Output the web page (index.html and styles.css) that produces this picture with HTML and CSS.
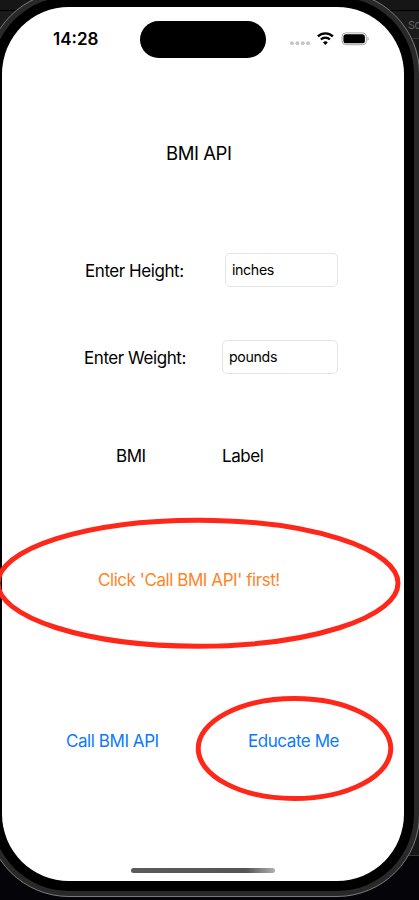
FILE: index.html
```html
<!DOCTYPE html>
<html lang="en">
<head>
<meta charset="utf-8">
<title>BMI API</title>
<link rel="stylesheet" href="styles.css">
</head>
<body>
<div class="backdrop">
  <div class="editor editor-top"></div>
  <div class="editor editor-tab">Sc</div>
  <div class="editor editor-body"></div>
</div>
<div class="phone">
  <div class="bezel">
    <main class="screen">
      <header class="status">
        <span class="time">14:28</span>
        <span class="island"></span>
        <svg class="indicators" width="80" height="18" viewBox="0 0 80 18">
          <g fill="#c5c5c5"><circle cx="3" cy="13.2" r="1.9"/><circle cx="8.4" cy="13.2" r="1.9"/><circle cx="13.8" cy="13.2" r="1.9"/><circle cx="19.1" cy="13.2" r="1.9"/></g>
          <g fill="none" stroke="#000" stroke-width="2.3"><path d="M28.9 6.4a10.6 10.6 0 0 1 15 0"/><path d="M31.9 9.5a6.3 6.3 0 0 1 9 0"/></g>
          <path d="M36.4 14.9l-2.4-2.5a3.5 3.5 0 0 1 4.8 0z"/>
          <rect x="53" y="2.9" width="24.4" height="11.8" rx="3.8" fill="none" stroke="#a6a6a6"/>
          <rect x="54.4" y="4.3" width="21.5" height="9" rx="2.6"/>
          <path d="M78.5 6.8a2.2 2.2 0 0 1 0 4z" fill="#a6a6a6"/>
        </svg>
      </header>
      <h1 class="title">BMI API</h1>
      <div class="row height-row">
        <label class="height-label" for="height">Enter Height:</label>
        <input class="field height-field" id="height" value="inches">
      </div>
      <div class="row weight-row">
        <label class="weight-label" for="weight">Enter Weight:</label>
        <input class="field weight-field" id="weight" value="pounds">
      </div>
      <div class="row result-row">
        <span class="bmi">BMI</span>
        <span class="category">Label</span>
      </div>
      <p class="message">Click 'Call BMI API' first!</p>
      <div class="row actions">
        <a class="call">Call BMI API</a>
        <a class="educate">Educate Me</a>
      </div>
      <div class="home"></div>
    </main>
  </div>
</div>
<svg class="marks" width="419" height="900" viewBox="0 0 419 900">
  <ellipse cx="198" cy="583.2" rx="200" ry="63"/>
  <ellipse cx="294.5" cy="748.5" rx="96.3" ry="50"/>
</svg>
</body>
</html>
```
FILE: styles.css
```css
* { box-sizing: border-box; }
body {
  position: relative;
  width: 419px;
  height: 900px;
  margin: 0;
  overflow: hidden;
  background: #050409;
  color: #000;
  font: 17px/22px Inter, "Liberation Sans", sans-serif;
  letter-spacing: -0.44px;
}
.backdrop {
  position: absolute;
  inset: 0;
  height: 856px;
  background: #171717;
  border-bottom: 1px solid #353535;
}
.editor-top { height: 11px; background: #161616; border-bottom: 1px solid #000; }
.editor-tab {
  height: 28px;
  padding: 3px 0 0 408px;
  color: #626262;
  font-size: 11px;
  background: #1b1b1b;
  border-bottom: 1px solid #363636;
}
.phone {
  position: absolute;
  left: -14px;
  top: -9px;
  width: 434px;
  height: 906px;
  padding: 5px;
  border: 1px solid #7b7b7b;
  border-radius: 83px;
  background: #292929;
}
.bezel {
  height: 894px;
  padding: 10px;
  border-radius: 77px;
  background: #000;
}
.screen {
  display: flex;
  flex-direction: column;
  height: 874px;
  border-radius: 67px;
  background: #fff;
  overflow: hidden;
}
.status {
  display: flex;
  height: 51px;
  padding: 14px 0 0 51px;
}
.time { width: 87px; padding-top: 7px; font-size: 17px; font-weight: 600; letter-spacing: 0; }
.island { width: 126px; height: 37px; border-radius: 19px; background: #000; }
.indicators { margin: 9px 0 0 23px; }
.title {
  margin: 83px 0 0 164px;
  font-size: 18.5px;
  font-weight: 400;
  line-height: 24px;
}
.row { display: flex; align-items: center; white-space: nowrap; }
.height-row { margin: 88px 0 0 83px; }
.height-label { width: 140px; padding-top: 2px; }
.field {
  height: 34px;
  padding: 0 6px 2px;
  border: 1px solid #e4e4e4;
  border-radius: 5px;
  color: #000;
  background: #fff;
  font: 14.2px Inter, sans-serif;
  letter-spacing: -0.35px;
}
.height-field { width: 113px; }
.weight-row { margin: 53px 0 0 82px; }
.weight-label { width: 138px; padding-top: 2px; }
.weight-field { width: 116px; }
.result-row { margin: 71px 0 0 114px; }
.bmi { width: 106px; }
.message { margin: 102px 0 0 96px; color: #ff8426; white-space: nowrap; }
.actions { margin: 139px 0 0 64px; color: #0a7aff; }
.call { width: 182px; }
.home {
  width: 144px;
  height: 5px;
  margin: auto 0 8px 129px;
  border-radius: 3px;
  background: linear-gradient(90deg, #5b5b5b 0%, #555 80%, #b0b0b0 100%);
}
.marks { position: absolute; left: 0; top: 0; fill: none; stroke: #ff271a; stroke-width: 5px; }
```
